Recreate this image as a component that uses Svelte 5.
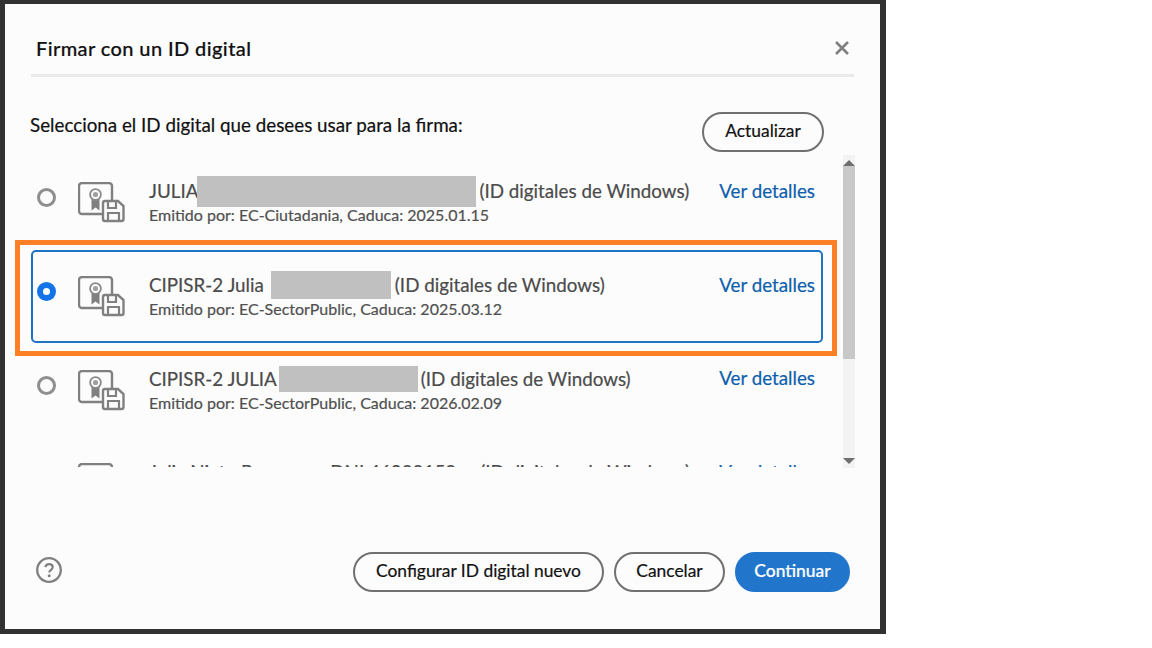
<script>
	const rows = [
		{ name: 'JULIA', mask: 279, maskH: 31, gap: -1, after: 3, sub: 'Emitido por: EC-Ciutadania, Caduca: 2025.01.15' },
		{ name: 'CIPISR-2 Julia', mask: 120, maskH: 28, gap: 7, after: 4, sub: 'Emitido por: EC-SectorPublic, Caduca: 2025.03.12', selected: true },
		{ name: 'CIPISR-2 JULIA', mask: 139, maskH: 26, gap: 2, after: 3, sub: 'Emitido por: EC-SectorPublic, Caduca: 2026.02.09' },
		{ name: 'Julia Nieto Parrono     DNI 46900150', mask: 0, maskH: 0, gap: 0, after: 0, sub: 'Emitido por: EC-Ciutadania, Caduca: 2026.02.09' }
	];
</script>

<div class="frame">
	<header class="head">
		<h2>Firmar con un ID digital</h2>
		<svg class="close" viewBox="0 0 16 16" width="16" height="16" aria-hidden="true">
			<path d="M2 2 14 14M14 2 2 14" stroke="#808080" stroke-width="2.6" fill="none" />
		</svg>
	</header>

	<div class="intro">
		<p>Selecciona el ID digital que desees usar para la firma:</p>
		<button class="btn small">Actualizar</button>
	</div>

	<div class="listWrap">
		<ul class="list">
			{#each rows as row}
				<li class="row" class:selected={row.selected}>
					<span class="radio"></span>
					<svg class="cert" viewBox="0 0 47 41" width="47" height="41" aria-hidden="true">
						<path d="M24 32H4a3 3 0 0 1-3-3V4a3 3 0 0 1 3-3h27a3 3 0 0 1 3 3v14" fill="none" stroke="#808080" stroke-width="2.4" />
						<path d="M13.5 16v12.5l4-3 4 3V16z" fill="#808080" />
						<circle cx="17.5" cy="12.5" r="5.4" fill="#fcfcfc" stroke="#8a8a8a" stroke-width="1.8" />
						<circle cx="17.5" cy="12.5" r="2.6" fill="#a0a0a0" />
						<path d="M27 19h13l5.5 5v13a2 2 0 0 1-2 2H27a2 2 0 0 1-2-2V21a2 2 0 0 1 2-2z" fill="#fcfcfc" stroke="#808080" stroke-width="2.4" />
						<path d="M30 20v6h8v-6M30 38v-7h11v7" fill="none" stroke="#808080" stroke-width="2.2" />
					</svg>
					<div class="info">
						<div class="title">{row.name}{#if row.mask}<span class="mask" style="width:{row.mask}px;height:{row.maskH}px;margin-left:{row.gap}px;margin-right:{row.after}px"></span>{:else}<span class="spacer"></span>{/if}(ID digitales de Windows)</div>
						<div class="sub">{row.sub}</div>
					</div>
					<a class="link" href="#top">Ver detalles</a>
				</li>
			{/each}
		</ul>
		<div class="scroll">
			<span class="arrow up"></span>
			<span class="thumb"></span>
			<span class="arrow down"></span>
		</div>
	</div>

	<footer class="foot">
		<svg class="help" viewBox="0 0 26 26" width="26" height="26" aria-hidden="true">
			<circle cx="13" cy="13" r="11.8" fill="none" stroke="#808080" stroke-width="2.3" />
			<path d="M9.4 10.2c.3-2 1.8-3 3.7-3 2.1 0 3.6 1.2 3.6 3 0 2.6-3.4 2.6-3.4 5.2" fill="none" stroke="#808080" stroke-width="2.2" />
			<circle cx="13.2" cy="18.8" r="1.5" fill="#808080" />
		</svg>
		<div class="actions">
			<button class="btn config">Configurar ID digital nuevo</button>
			<button class="btn cancel">Cancelar</button>
			<button class="btn primary">Continuar</button>
		</div>
	</footer>

	<div class="callout"></div>
</div>

<style>
	:global(body) {
		background: #fff;
	}

	.frame {
		position: relative;
		box-sizing: border-box;
		width: 886px;
		height: 634px;
		display: flex;
		flex-direction: column;
		background: #fcfcfc;
		border-style: solid;
		border-color: #323232;
		border-width: 4px 6px 5px 5px;
		font-family: Lato, sans-serif;
		color: #111;
		-webkit-text-stroke: 0.2px;
	}

	.head {
		height: 52px;
		margin: 0 26px;
		padding: 18px 1px 0 5px;
		display: flex;
		align-items: center;
		justify-content: space-between;
		border-bottom: 3px solid #eaeaea;
	}

	h2 {
		margin: 0;
		font-size: 20px;
		font-weight: 500;
		letter-spacing: 0.4px;
		color: #111;
	}

	.close {
		margin-right: 3px;
	}

	.intro {
		height: 75px;
		margin: 0 56px 0 25px;
		display: flex;
		align-items: flex-start;
		justify-content: space-between;
		padding-top: 35px;
		box-sizing: border-box;
	}

	p {
		margin: 1px 0 0;
		font-size: 18.8px;
		line-height: 24px;
	}

	.btn {
		height: 40px;
		box-sizing: border-box;
		border: 2px solid #707070;
		border-radius: 20px;
		background: transparent;
		font: inherit;
		font-size: 17.4px;
		color: #111;
		padding: 0 0 3px;
	}

	.small {
		width: 122px;
	}

	.listWrap {
		height: 313px;
		margin-left: 26px;
		margin-top: 3px;
		display: flex;
	}

	.list {
		list-style: none;
		margin: 1px 20px 0 0;
		padding: 0;
		width: 792px;
		height: 311px;
		overflow: hidden;
	}

	.row {
		box-sizing: border-box;
		height: 93.67px;
		display: flex;
		align-items: center;
		border: 2px solid transparent;
		border-radius: 5px;
		padding-left: 4px;
	}

	.selected {
		border-color: #1e73c4;
	}

	.radio {
		box-sizing: border-box;
		width: 19px;
		height: 19px;
		border: 3px solid #8e8e8e;
		border-radius: 50%;
		margin-top: -10px;
		flex-shrink: 0;
	}

	.selected .radio {
		border: 6px solid #1473e6;
		background: #fff;
	}

	.cert {
		margin-left: 22px;
		flex-shrink: 0;
	}

	.info {
		margin: 0 0 1px 24px;
		flex: 1;
		white-space: nowrap;
	}

	.title {
		font-size: 18.8px;
		line-height: 24px;
		color: #4b4b4b;
		white-space: pre;
	}

	.mask {
		display: inline-block;
		vertical-align: middle;
		margin-top: -10px;
		margin-bottom: -6px;
		background: #c0c0c0;
	}

	.spacer {
		display: inline-block;
		width: 24px;
	}

	.sub {
		font-size: 16px;
		line-height: 20px;
		margin-top: 2px;
		color: #505050;
	}

	.link {
		align-self: flex-start;
		margin: 21px 6px 0 0;
		font-size: 18.8px;
		line-height: 24px;
		color: #0d5fad;
		text-decoration: none;
	}

	.scroll {
		width: 12px;
		background: #f3f3f3;
		display: flex;
		flex-direction: column;
		align-items: stretch;
		padding-top: 5px;
		box-sizing: border-box;
	}

	.arrow {
		width: 0;
		height: 0;
		align-self: center;
		border-left: 6px solid transparent;
		border-right: 6px solid transparent;
	}

	.up {
		border-bottom: 6px solid #6e6e6e;
	}

	.down {
		margin-top: auto;
		margin-bottom: 4px;
		border-top: 6px solid #6e6e6e;
	}

	.thumb {
		height: 193px;
		background: #c8c8c8;
	}

	.foot {
		flex: 1;
		margin: 0 30px 0 31px;
		display: flex;
		align-items: flex-start;
		justify-content: space-between;
		padding-top: 84px;
		box-sizing: border-box;
	}

	.help {
		margin-top: 5px;
	}

	.actions {
		display: flex;
		gap: 10px;
	}

	.config {
		width: 251px;
	}

	.cancel {
		width: 111px;
	}

	.primary {
		width: 115px;
		background: #2176cc;
		border-color: #2176cc;
		color: #fff;
		font-weight: 500;
	}

	.callout {
		position: absolute;
		left: 10px;
		top: 236px;
		width: 822px;
		height: 116px;
		box-sizing: border-box;
		border: 5px solid #ff7f27;
		pointer-events: none;
	}
</style>
